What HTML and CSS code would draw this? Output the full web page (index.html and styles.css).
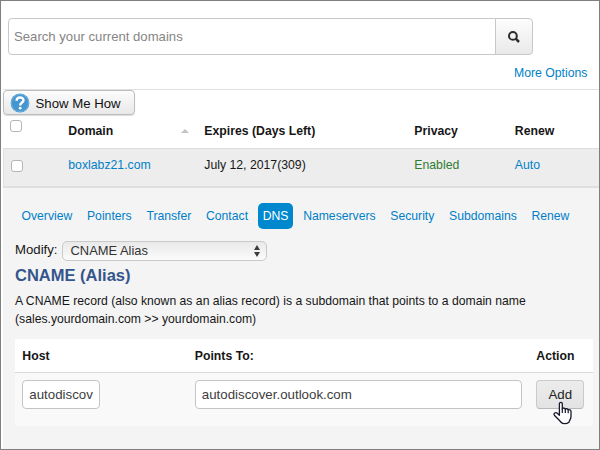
FILE: index.html
```html
<!DOCTYPE html>
<html lang="en">
<head>
<meta charset="utf-8">
<title>Domains</title>
<link rel="stylesheet" href="styles.css">
</head>
<body>
<main class="window">
  <form class="search">
    <input class="search-field" type="text" placeholder="Search your current domains">
    <button class="search-button" type="button" aria-label="Search">
      <svg width="12" height="12" viewBox="0 0 12 12"><circle cx="4.9" cy="4.9" r="3.9" fill="none" stroke="#2c2c30" stroke-width="2"/><path d="M7.7 7.7 11 11" stroke="#2c2c30" stroke-width="2.5"/></svg>
    </button>
  </form>
  <div class="options"><a href="#">More Options</a></div>

  <section class="domains">
    <button class="how" type="button">
      <svg width="20" height="20" viewBox="0 0 20 20"><circle cx="10" cy="10" r="9.4" fill="#4595cf"/><circle cx="10" cy="10" r="8.6" fill="none" stroke="#6cb0df" stroke-width="1"/><path d="M6.6 7.7C6.6 3.4 13.5 3.5 13.5 7.3 13.5 9.7 10.2 9.5 10.2 12.4" fill="none" stroke="#fff" stroke-width="2.4"/><circle cx="10.2" cy="15.2" r="1.4" fill="#fff"/></svg>
      <span>Show Me How</span>
    </button>
    <div class="row head">
      <input class="check" type="checkbox" aria-label="Select all">
      <span class="sortable">Domain <i class="sort"></i></span>
      <span>Expires (Days Left)</span>
      <span>Privacy</span>
      <span>Renew</span>
    </div>
    <div class="row entry">
      <input class="check" type="checkbox" aria-label="Select domain">
      <a href="#">boxlabz21.com</a>
      <span>July 12, 2017(309)</span>
      <span class="enabled">Enabled</span>
      <a href="#">Auto</a>
    </div>
  </section>

  <section class="detail">
    <nav class="tabs">
      <a href="#">Overview</a>
      <a href="#">Pointers</a>
      <a href="#">Transfer</a>
      <a href="#">Contact</a>
      <a href="#" class="active">DNS</a>
      <a href="#">Nameservers</a>
      <a href="#">Security</a>
      <a href="#">Subdomains</a>
      <a href="#">Renew</a>
    </nav>
    <div class="modify">
      <span>Modify:</span>
      <div class="select">
        <span>CNAME Alias</span>
        <svg width="6" height="12" viewBox="0 0 6 12"><path d="M3 0 6 5H0ZM3 12 0 7h6Z" fill="#3c3c3c"/></svg>
      </div>
    </div>
    <h1>CNAME (Alias)</h1>
    <p>A CNAME record (also known as an alias record) is a subdomain that points to a domain name<br>(sales.yourdomain.com &gt;&gt; yourdomain.com)</p>
    <div class="records">
      <div class="record labels"><span>Host</span><span>Points To:</span><span>Action</span></div>
      <div class="record values">
        <input class="field host" type="text" value="autodiscov">
        <input class="field target" type="text" value="autodiscover.outlook.com">
        <div class="action">
          <button class="add" type="button">Add</button>
          <svg class="pointer" width="20" height="24" viewBox="0 0 20 24"><path d="M6.4 14.2V2.8C6.4.8 9.3.8 9.3 2.8V8C9.5 6.6 12.2 6.7 12.3 8.4 12.8 7.2 15 7.6 15.2 9.2 16 8.2 18 8.9 18 10.4V15.5C18 18.5 16.2 19.3 16 21.2 13.5 23.3 9.5 23 8.3 21.5 6.6 19.4 4.5 17.5 1.4 14.2.2 12.2 2.6 10.8 4.2 12.2Z" fill="#fff" stroke="#17182a" stroke-width="1.3" stroke-linejoin="round"/><path d="M9.3 7.5V12M12.3 8.3V12M15.2 9.2V12.2" stroke="#17182a" stroke-width="1.2"/></svg>
        </div>
      </div>
    </div>
  </section>
</main>
</body>
</html>
```
FILE: styles.css
```css
* { box-sizing: border-box; }

body {
  margin: 0;
  font: 12.25px/18px "Liberation Sans", Arial, sans-serif;
  color: #161616;
}

a { color: #007fc8; text-decoration: none; }

input, button { font-family: inherit; margin: 0; }

.window {
  display: flex;
  flex-direction: column;
  width: 600px;
  height: 450px;
  border: 1px solid #7f7f7f;
  background: #fff;
  padding: 17px 0 0 2px;
  overflow: hidden;
}

.search {
  display: flex;
  width: 525px;
  height: 37px;
  margin-left: 5px;
}

.search-field {
  flex: 1;
  min-width: 0;
  border: 1px solid #c8c8c8;
  border-radius: 4px 0 0 4px;
  padding: 0 5px;
  font-size: 13.15px;
}

.search-field::placeholder { color: #858585; }

.search-button {
  display: flex;
  align-items: center;
  justify-content: center;
  width: 38px;
  margin-left: -1px;
  padding: 0;
  border: 1px solid #c8c8c8;
  border-radius: 0 4px 4px 0;
  background: linear-gradient(#fdfdfd, #e9e9e9);
}

.options {
  height: 34px;
  padding: 9px 11.5px 0 0;
  text-align: right;
}

.domains { border-top: 1px solid #e0e0e0; height: 99px; }

.how {
  display: flex;
  align-items: center;
  gap: 6px;
  width: 132px;
  height: 25px;
  padding: 0 6px;
  border: 1px solid #bdbdbd;
  border-radius: 4px;
  background: linear-gradient(#fcfcfc, #e8e8e8);
  box-shadow: 0 1px 1px #ddd;
  font-size: 13.2px;
  color: #111;
}

.how span { margin-left: -0.5px; padding-top: 1px; }

.row {
  display: grid;
  grid-template-columns: 58.3px 136px 210px 100.5px 1fr;
  padding-left: 7px;
}

.row .check {
  appearance: none;
  width: 12px;
  height: 12px;
  border: 1px solid #b5b5b5;
  border-radius: 3px;
  background: #fff;
}

.head { height: 33px; padding-top: 7px; font-weight: bold; }
.head .check { margin-top: -2px; }

.sortable { display: flex; justify-content: space-between; padding-right: 15px; }

.sort {
  margin-top: 7px;
  align-self: flex-start;
  border: solid transparent;
  border-width: 0 4.5px 4.5px;
  border-bottom-color: #c2c2c2;
}

.row.entry {
  height: 40px;
  padding: 7px 0 0 7px;
  grid-template-columns: 57.3px 136px 210px 100.5px 1fr;
  border-top: 1px solid #dcdcdc;
  border-bottom: 2px solid #dfdfdf;
  border-left: 1px solid #e0e0e0;
  background: #ededed;
}

.entry .check { margin-top: 4px; }
.enabled { color: #2f7d32; }

.detail { flex: 1; background: #f4f4f4; padding: 15px 0 0 12px; }

.tabs { display: flex; gap: 4.7px; padding-left: 1.5px; font-size: 12.2px; }

.tabs a { padding: 4px 5px; border-radius: 5px; }
.tabs .active { background: #0088cf; color: #fff; }

.modify {
  display: flex;
  gap: 4px;
  height: 20px;
  margin-top: 12px;
  font-size: 13.2px;
}

.select {
  display: flex;
  align-items: center;
  justify-content: space-between;
  width: 205px;
  height: 20px;
  padding: 0 6px 0 8px;
  border: 1px solid #c9c9c9;
  border-radius: 5px;
  background: linear-gradient(#e9e9e9, #fbfbfb);
  font-size: 12.9px;
  color: #333;
}

h1 {
  margin: 3px 0 0;
  font-size: 16.5px;
  line-height: 22px;
  color: #35558c;
}

p { margin: 6px 0 0; font-size: 12.2px; }

.records { width: 578px; margin-top: 11px; }

.record {
  display: grid;
  grid-template-columns: 172.5px 341.5px 1fr;
  padding-left: 7.3px;
}

.labels {
  height: 34px;
  padding-top: 8px;
  border-bottom: 1px solid #dadada;
  background: #fff;
  font-weight: bold;
}

.values { height: 53px; padding-top: 7px; background: #f9f9f9; }

.field {
  height: 29px;
  border: 1px solid #c4c4c4;
  border-radius: 4px;
  padding: 0 6px;
  background: #fff;
  font-size: 13.3px;
  color: #3d3d3d;
}

.host { width: 78px; }
.target { width: 327px; }

.action { position: relative; }

.add {
  width: 48px;
  height: 29px;
  padding: 0;
  border: 1px solid #cacaca;
  border-bottom-color: #b8b8b8;
  border-radius: 4px;
  background: linear-gradient(#ececec, #e3e3e3);
  font-size: 13.3px;
  color: #222;
}

.pointer { position: absolute; left: 17px; top: 21px; }
```
